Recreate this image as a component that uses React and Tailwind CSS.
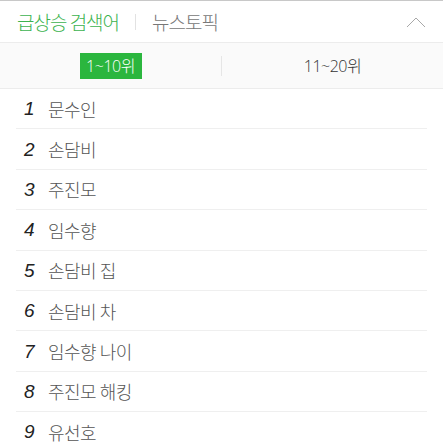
export default function App() {
  const items = ["문수인", "손담비", "주진모", "임수향", "손담비 집", "손담비 차", "임수향 나이", "주진모 해킹", "유선호"];
  const ko = { fontFamily: '"Noto Sans CJK KR", "Noto Sans", sans-serif' };
  const mix = { fontFamily: '"Open Sans", "Noto Sans CJK KR", sans-serif' };
  return (
    <div className="w-[443px] h-[443px] overflow-hidden bg-white border-t border-[#c8c8c8]" style={ko}>
      <div className="h-[42px] flex items-center border-b border-[#ececec] pl-[17px] pr-[17px]">
        <span className="text-[19px] font-light text-[#3cb34f] tracking-[-1px] leading-none">급상승 검색어</span>
        <span className="mx-[16px] w-px h-[16px] bg-[#e2e2e2]" />
        <span className="text-[19px] font-light text-[#777] tracking-[-1px] leading-none">뉴스토픽</span>
        <svg className="ml-auto" width="20" height="12" viewBox="0 0 20 12">
          <path d="M1 11 L10 2 L19 11" fill="none" stroke="#a8a8a8" strokeWidth="1" />
        </svg>
      </div>
      <div className="h-[46px] flex items-center bg-[#fafafa] border-b border-[#ececec]">
        <div className="flex-1 flex justify-center">
          <span className="h-[26px] w-[62px] bg-[#2bb63e] text-white text-[16px] font-light tracking-[-0.5px] flex items-center justify-center leading-none" style={mix}>1~10위</span>
        </div>
        <span className="w-px h-[20px] bg-[#e6e6e6]" />
        <div className="flex-1 flex justify-center">
          <span className="text-[16px] font-light text-[#333] tracking-[-0.5px] leading-none" style={mix}>11~20위</span>
        </div>
      </div>
      <div>
        {items.map((t, i) => (
          <div key={i} className="mx-[16px] w-[411px] h-[40.4px] flex items-center border-b border-[#efefef]">
            <span className="w-[32px] pl-[8px] text-[19px] italic text-[#222] leading-none" style={{ fontFamily: '"Liberation Sans", sans-serif' }}>{i + 1}</span>
            <span className="text-[18px] font-light text-[#555] tracking-[-0.5px] leading-none">{t}</span>
          </div>
        ))}
      </div>
    </div>
  );
}
